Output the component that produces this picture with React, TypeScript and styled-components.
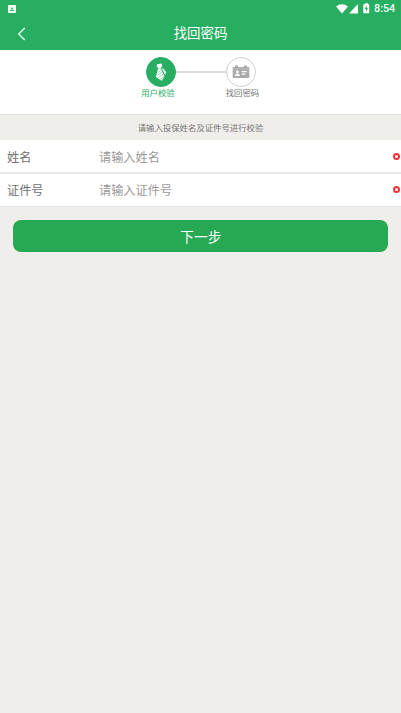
import React from "react";
import styled, { createGlobalStyle } from "styled-components";

const GlobalStyle = createGlobalStyle`
  * { box-sizing: border-box; }
  html { background: #efeeea; }
  body {
    margin: 0;
    font-family: "Noto Sans CJK SC", sans-serif;
    color: #707070;
  }
`;

const Page = styled.div`
  min-height: 713px;
  background: #efeeea;
`;

const StatusBar = styled.div`
  display: flex;
  align-items: center;
  justify-content: space-between;
  height: 17px;
  padding: 0 5px 0 8px;
  background: #27ae61;
`;

const StatusIcons = styled.div`
  display: flex;
  align-items: center;
`;

const Clock = styled.span`
  width: 22px;
  margin-left: 3px;
  font: 500 10.8px/17px Roboto, sans-serif;
  color: #f2fff6;
  white-space: nowrap;
`;

const TitleBar = styled.header`
  display: grid;
  grid-template-columns: 44px 1fr 44px;
  align-items: center;
  height: 33px;
  background: #27ae61;
`;

const BackButton = styled.button`
  display: flex;
  padding: 0 0 0 17px;
  border: 0;
  background: none;
`;

const Title = styled.h1`
  height: 33px;
  margin: 0;
  font-size: 13.4px;
  font-weight: 400;
  line-height: 31px;
  text-align: center;
  color: #fff;
`;

const Steps = styled.section`
  display: flex;
  justify-content: center;
  height: 65px;
  padding-top: 7px;
  background: #fff;
  border-bottom: 1px solid #e1e1e0;
`;

const Step = styled.div`
  display: flex;
  flex-direction: column;
  align-items: center;
  width: 30px;
`;

const StepCircle = styled.div<{ $active?: boolean }>`
  display: flex;
  align-items: center;
  justify-content: center;
  width: 30px;
  height: 30px;
  flex: none;
  border-radius: 50%;
  border: 1px solid ${(p) => (p.$active ? "#27ae61" : "#cfcfcf")};
  background: ${(p) => (p.$active ? "#27ae61" : "#fff")};
`;

const StepLabel = styled.span<{ $active?: boolean }>`
  font-size: 8.4px;
  line-height: 10px;
  white-space: nowrap;
  color: ${(p) => (p.$active ? "#27ae61" : "#777")};
  ${(p) => (p.$active ? "margin-right: 5px;" : "margin-left: 4px;")}
`;

const Connector = styled.div`
  width: 50px;
  height: 2px;
  margin-top: 13.5px;
  background: #dedede;
`;

const Notice = styled.p`
  height: 25px;
  margin: 0;
  font-size: 8.4px;
  line-height: 25px;
  text-align: center;
  color: #777;
`;

const Form = styled.form`
  border-bottom: 1px solid #e2e2e3;
`;

const Field = styled.label`
  display: grid;
  grid-template-columns: 92px 1fr 8px;
  align-items: center;
  height: 32px;
  padding: 1px 0 0 7px;
  background: #fff;
  font-size: 12.2px;

  & + & {
    height: 34px;
    padding-top: 0;
    border-top: 2px solid #e9e9e9;
  }
`;

const Input = styled.input`
  width: 100%;
  height: 30px;
  padding: 0;
  border: 0;
  outline: 0;
  background: transparent;
  font: inherit;
  color: #555;

  &::placeholder {
    color: #999;
    opacity: 1;
  }
`;

const RequiredMark = styled.i`
  width: 7px;
  height: 7px;
  margin-bottom: 1px;
  border: 2px solid #ee333a;
  border-radius: 50%;
`;

const NextButton = styled.button`
  display: block;
  width: calc(100% - 26.6px);
  height: 32px;
  margin: 13px 0 0 13.2px;
  padding: 0 0 0 1px;
  border: 0;
  border-radius: 8px;
  background: #27a853;
  font: 400 13.7px/32px "Noto Sans CJK SC", sans-serif;
  color: #fff;
`;

const AppIcon = () => (
  <svg width="8" height="8" viewBox="0 0 8 8">
    <rect width="8" height="8" rx="1" fill="#f4fff8" />
    <path d="M4 1.7 5.3 4.2H2.7Z M1.9 4.7H6.1V6H1.9Z" fill="#4dbb7c" />
  </svg>
);

const SignalIcons = () => (
  <svg width="35" height="12" viewBox="0 0 35 12" fill="#fff">
    <path d="M0 3.6Q6 -1 12 3.6L6 10.5Z" />
    <path d="M22 1.1V10.5H13Z" />
    <path d="M29 .2h3v1h1.2v9h-5.9v-9H29Z" />
    <path d="M30.8 2.5 28.6 6h1.5v2.7l2-3.5h-1.3Z" fill="#27ae61" />
  </svg>
);

const BackIcon = () => (
  <svg width="10" height="14" viewBox="0 0 10 14" fill="none" stroke="#e9fff1" strokeWidth="1.4">
    <path d="M7.8 1 1.7 7l6.1 6" />
  </svg>
);

const TieIcon = () => (
  <svg width="14" height="18" viewBox="0 0 14 18">
    <path d="M3.1 1.2 7.6.5 8.2 2.8 6.9 5.2H4.3L2.7 3.2Z" fill="#fff" />
    <path d="M4.1 5.6h2.8l3.6 7.8-2.9 4.3-5.7-3.6Z" fill="#fff" />
    <path d="m3.8 9.4 3.7-2.3M3.2 12.3l5.4-3.4M3.8 14.8l6-3.9M6 16.3l4.2-2.8" stroke="#27ae61" strokeWidth=".5" />
    <path d="M7.8 5.5 9.1 5.2 12.4 9.3 11.2 12Z" fill="#e3f7eb" />
  </svg>
);

const CardIcon = () => (
  <svg width="18" height="14" viewBox="0 0 18 14">
    <path d="M1.5 2H3V.5h3V2h6V.5h3V2h1.5q.8 0 .8.8v9.4q0 .8-.8.8h-15q-.8 0-.8-.8V2.8q0-.8.8-.8Z" fill="#aaa" />
    <path d="M1 4h16" stroke="#bebebe" />
    <circle cx="5.4" cy="7" r="1.4" fill="#fff" />
    <path d="M2.8 11q.3-2.5 2.6-2.5T8 11ZM9.8 6h5v1.3h-5Zm0 2.5h3.5v1.2H9.8Z" fill="#fff" />
  </svg>
);

const fields = [
  { name: "name", label: "姓名", placeholder: "请输入姓名" },
  { name: "idNumber", label: "证件号", placeholder: "请输入证件号" },
];

export default function App() {
  return (
    <>
      <GlobalStyle />
      <Page>
        <StatusBar>
          <AppIcon />
          <StatusIcons>
            <SignalIcons />
            <Clock>8:54</Clock>
          </StatusIcons>
        </StatusBar>
        <TitleBar>
          <BackButton type="button" aria-label="返回">
            <BackIcon />
          </BackButton>
          <Title>找回密码</Title>
        </TitleBar>
        <Steps>
          <Step>
            <StepCircle $active>
              <TieIcon />
            </StepCircle>
            <StepLabel $active>用户校验</StepLabel>
          </Step>
          <Connector />
          <Step>
            <StepCircle>
              <CardIcon />
            </StepCircle>
            <StepLabel>找回密码</StepLabel>
          </Step>
        </Steps>
        <Notice>请输入投保姓名及证件号进行校验</Notice>
        <Form>
          {fields.map((field) => (
            <Field key={field.name}>
              <span>{field.label}</span>
              <Input name={field.name} placeholder={field.placeholder} />
              <RequiredMark />
            </Field>
          ))}
        </Form>
        <NextButton type="button">下一步</NextButton>
      </Page>
    </>
  );
}
